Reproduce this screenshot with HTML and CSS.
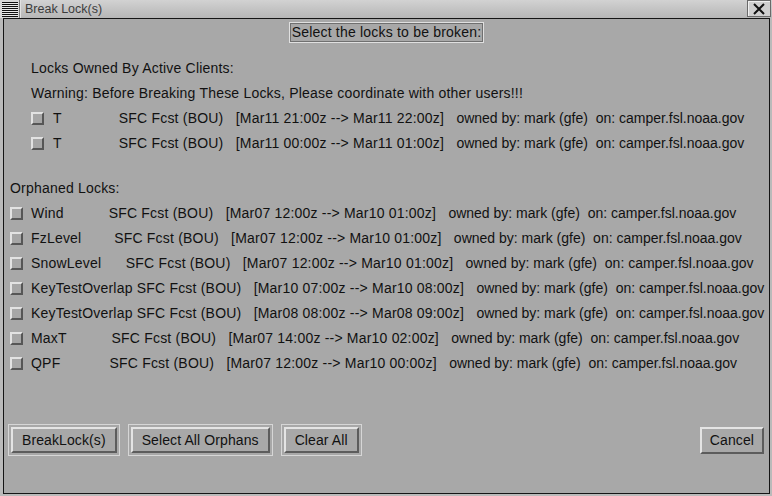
FILE: index.html
```html
<!DOCTYPE html>
<html>
<head>
<meta charset="utf-8">
<title>Break Lock(s)</title>
<link rel="stylesheet" href="styles.css">
</head>
<body>
<div class="titlebar">
  <div class="menu-icon"><div class="lines"></div></div>
  <div class="title">Break Lock(s)</div>
  <div class="close">
    <svg width="18" height="16" viewBox="0 0 18 16"><path d="M4 3 L14 13 M14 3 L4 13" stroke="#111" stroke-width="2" fill="none"/></svg>
  </div>
</div>
<div class="frame">
  <div class="header"><span class="header-label">Select the locks to be broken:</span></div>

  <div class="active">
    <div class="line">Locks Owned By Active Clients:</div>
    <div class="line">Warning: Before Breaking These Locks, Please coordinate with other users!!!</div>
    <div class="row"><span class="check"></span><span class="txt">T              SFC Fcst (BOU)   [Mar11 21:00z --&gt; Mar11 22:00z]   <span class="owner">owned by: mark (gfe)  on: camper.fsl.noaa.gov</span></span></div>
    <div class="row"><span class="check"></span><span class="txt">T              SFC Fcst (BOU)   [Mar11 00:00z --&gt; Mar11 01:00z]   <span class="owner">owned by: mark (gfe)  on: camper.fsl.noaa.gov</span></span></div>
  </div>

  <div class="orphans">
    <div class="line">Orphaned Locks:</div>
    <div class="row"><span class="check"></span><span class="txt">Wind           SFC Fcst (BOU)   [Mar07 12:00z --&gt; Mar10 01:00z]   <span class="owner">owned by: mark (gfe)  on: camper.fsl.noaa.gov</span></span></div>
    <div class="row"><span class="check"></span><span class="txt">FzLevel        SFC Fcst (BOU)   [Mar07 12:00z --&gt; Mar10 01:00z]   <span class="owner">owned by: mark (gfe)  on: camper.fsl.noaa.gov</span></span></div>
    <div class="row"><span class="check"></span><span class="txt">SnowLevel      SFC Fcst (BOU)   [Mar07 12:00z --&gt; Mar10 01:00z]   <span class="owner">owned by: mark (gfe)  on: camper.fsl.noaa.gov</span></span></div>
    <div class="row"><span class="check"></span><span class="txt">KeyTestOverlap SFC Fcst (BOU)   [Mar10 07:00z --&gt; Mar10 08:00z]   <span class="owner">owned by: mark (gfe)  on: camper.fsl.noaa.gov</span></span></div>
    <div class="row"><span class="check"></span><span class="txt">KeyTestOverlap SFC Fcst (BOU)   [Mar08 08:00z --&gt; Mar08 09:00z]   <span class="owner">owned by: mark (gfe)  on: camper.fsl.noaa.gov</span></span></div>
    <div class="row"><span class="check"></span><span class="txt">MaxT           SFC Fcst (BOU)   [Mar07 14:00z --&gt; Mar10 02:00z]   <span class="owner">owned by: mark (gfe)  on: camper.fsl.noaa.gov</span></span></div>
    <div class="row"><span class="check"></span><span class="txt">QPF            SFC Fcst (BOU)   [Mar07 12:00z --&gt; Mar10 00:00z]   <span class="owner">owned by: mark (gfe)  on: camper.fsl.noaa.gov</span></span></div>
  </div>

  <div class="buttons">
    <div class="left-buttons">
      <div class="ring"><button class="btn">BreakLock(s)</button></div>
      <div class="ring"><button class="btn">Select All Orphans</button></div>
      <div class="ring"><button class="btn">Clear All</button></div>
    </div>
    <button class="btn cancel">Cancel</button>
  </div>
</div>
</body>
</html>
```
FILE: styles.css
```css
html, body {
  margin: 0;
  padding: 0;
}
body {
  width: 772px;
  height: 496px;
  background: #bababa;
  font-family: "Liberation Sans", Arial, sans-serif;
  font-size: 14px;
  letter-spacing: 0.2px;
  color: #111;
  overflow: hidden;
}
.titlebar {
  height: 18px;
  display: flex;
  align-items: stretch;
  background: linear-gradient(#d2d2d2, #b6b6b6);
  letter-spacing: 0;
}
.menu-icon {
  width: 19px;
  border-right: 1px solid #7a7a7a;
  box-shadow: 1px 0 0 #e2e2e2;
  display: flex;
  align-items: center;
  justify-content: center;
  background: #d8d8d8;
}
.menu-icon .lines {
  width: 16px;
  height: 15px;
  background: repeating-linear-gradient(to bottom, #111 0, #111 1px, #e8e8e8 1px, #e8e8e8 2px);
}
.title {
  flex: 1;
  padding-left: 5px;
  font-size: 12.5px;
  line-height: 18px;
  color: #3c3c3c;
}
.close {
  width: 22px;
  margin: 0 1px 1px 0;
  border: 1px solid #6a6a6a;
  box-shadow: inset 1px 1px 0 #f0f0f0;
  background: #cfcfcf;
  display: flex;
  align-items: center;
  justify-content: center;
}
.frame {
  margin: 0 2px 0 3px;
  height: 474px;
  border: 1px solid #151515;
  background: #a8a8a8;
  display: flex;
  flex-direction: column;
}
.header {
  margin-top: 3px;
  display: flex;
  justify-content: center;
}
.header-label {
  padding: 0 2px;
  line-height: 19px;
  border: 1px solid #e0e0e0;
  box-shadow: inset 0 0 0 1px #707070;
}
.active {
  margin-top: 13px;
  padding-left: 27px;
}
.orphans {
  margin-top: 20px;
  padding-left: 6px;
}
.line, .row {
  height: 25px;
  line-height: 25px;
  white-space: pre;
}
.row {
  display: flex;
  align-items: center;
}
.check {
  width: 9px;
  height: 9px;
  border: 2px solid;
  border-color: #e2e2e2 #565656 #565656 #e2e2e2;
  background: #a6a6a6;
  flex: none;
}
.active .check {
  margin-right: 9px;
}
.orphans .check {
  margin-right: 8px;
}
.txt {
  white-space: pre;
}
.owner {
  letter-spacing: 0;
}
.buttons {
  margin-top: 48px;
  padding: 0 5px 0 4px;
  display: flex;
  justify-content: space-between;
  align-items: center;
}
.left-buttons {
  display: flex;
  gap: 8px;
}
.ring {
  border: 1px solid #d6d6d6;
  padding: 2px;
}
.btn {
  font-family: "Liberation Sans", Arial, sans-serif;
  font-size: 14px;
  letter-spacing: 0.1px;
  color: #111;
  background: #a8a8a8;
  height: 26px;
  line-height: 22px;
  padding: 0 9px;
  margin: 0;
  border: 2px solid;
  border-color: #e4e4e4 #5c5c5c #5c5c5c #e4e4e4;
  display: block;
}
.cancel {
  height: 27px;
  padding: 0 8px;
}
```
